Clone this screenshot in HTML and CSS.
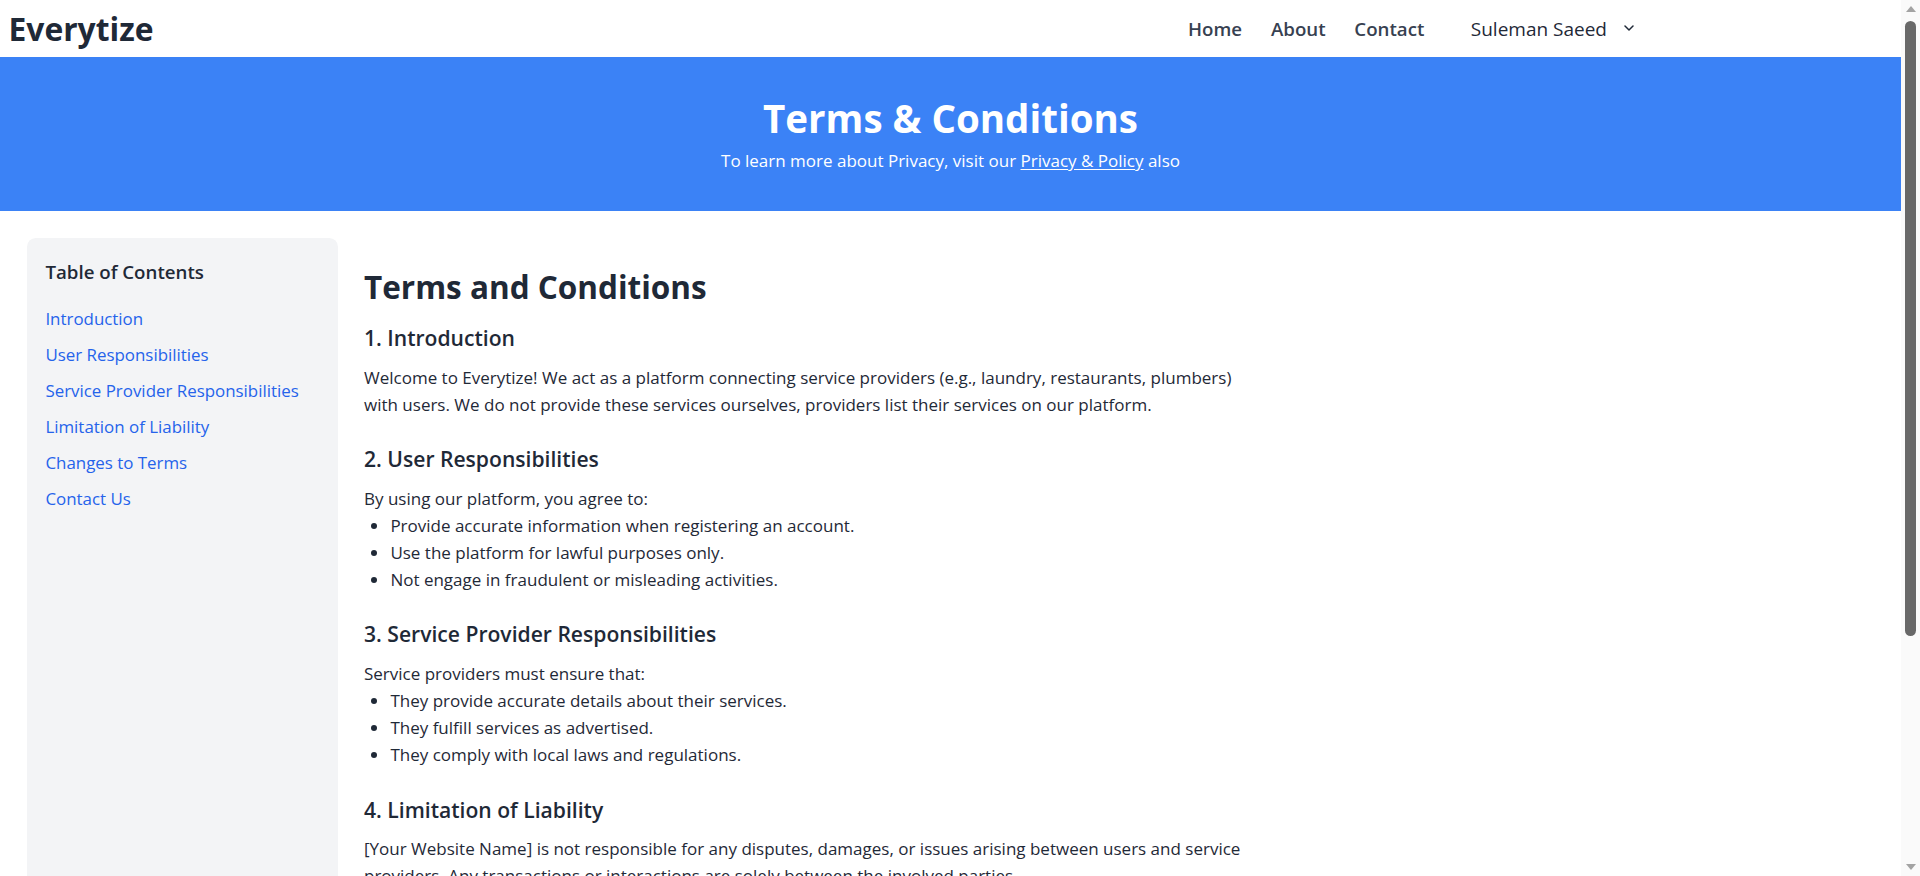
FILE: index.html
```html
<!DOCTYPE html>
<html lang="en">
<head>
<meta charset="utf-8">
<title>Terms &amp; Conditions - Everytize</title>
<link rel="stylesheet" href="styles.css">
</head>
<body>
<header class="topbar">
  <a class="logo" href="#">Everytize</a>
  <nav class="nav">
    <a href="#">Home</a>
    <a href="#">About</a>
    <a href="#">Contact</a>
    <button class="user" type="button">Suleman Saeed
      <svg class="chev" width="10" height="6" viewBox="0 0 10 6"><polyline points="1,1 5,5 9,1" fill="none" stroke="#1f2937" stroke-width="1.5" stroke-linecap="round" stroke-linejoin="round"/></svg>
    </button>
  </nav>
</header>

<section class="hero">
  <h1>Terms &amp; Conditions</h1>
  <p>To learn more about Privacy, visit our <a href="#">Privacy &amp; Policy</a> also</p>
</section>

<div class="page">
  <aside class="toc">
    <h3>Table of Contents</h3>
    <ul>
      <li><a href="#intro">Introduction</a></li>
      <li><a href="#user">User Responsibilities</a></li>
      <li><a href="#provider">Service Provider Responsibilities</a></li>
      <li><a href="#liability">Limitation of Liability</a></li>
      <li><a href="#changes">Changes to Terms</a></li>
      <li><a href="#contact">Contact Us</a></li>
    </ul>
  </aside>

  <main class="content">
    <h1>Terms and Conditions</h1>

    <section class="section" id="intro">
      <h2>1. Introduction</h2>
      <p>Welcome to Everytize! We act as a platform connecting service providers (e.g., laundry, restaurants, plumbers) with users. We do not provide these services ourselves, providers list their services on our platform.</p>
    </section>

    <section class="section" id="user">
      <h2>2. User Responsibilities</h2>
      <p>By using our platform, you agree to:</p>
      <ul>
        <li>Provide accurate information when registering an account.</li>
        <li>Use the platform for lawful purposes only.</li>
        <li>Not engage in fraudulent or misleading activities.</li>
      </ul>
    </section>

    <section class="section" id="provider">
      <h2>3. Service Provider Responsibilities</h2>
      <p>Service providers must ensure that:</p>
      <ul>
        <li>They provide accurate details about their services.</li>
        <li>They fulfill services as advertised.</li>
        <li>They comply with local laws and regulations.</li>
      </ul>
    </section>

    <section class="section" id="liability">
      <h2>4. Limitation of Liability</h2>
      <p>[Your Website Name] is not responsible for any disputes, damages, or issues arising between users and service providers. Any transactions or interactions are solely between the involved parties.</p>
    </section>

    <section class="section" id="changes">
      <h2>5. Changes to Terms</h2>
      <p>We may update these Terms and Conditions from time to time. Continued use of the platform after changes are posted means you accept the updated terms.</p>
    </section>

    <section class="section" id="contact">
      <h2>6. Contact Us</h2>
      <p>If you have any questions about these Terms and Conditions, please contact us through the Contact page.</p>
    </section>
  </main>
</div>

<div class="scrollbar" aria-hidden="true">
  <svg class="sb-arrow sb-up" width="10" height="6" viewBox="0 0 10 6"><polygon points="0,6 5,0 10,6" fill="#a3a3a3"/></svg>
  <div class="sb-thumb"></div>
  <svg class="sb-arrow sb-down" width="10" height="6" viewBox="0 0 10 6"><polygon points="0,0 10,0 5,6" fill="#a3a3a3"/></svg>
</div>
</body>
</html>
```
FILE: styles.css
```css
html, body {
  margin: 0;
  padding: 0;
}

body {
  font-family: "Open Sans", "Noto Sans", sans-serif;
  color: #1f2937;
  background: #ffffff;
  padding-right: 19px;
}

/* header */
.topbar {
  display: flex;
  align-items: center;
  height: 57px;
  padding: 0 267px 0 8.5px;
  background: #ffffff;
}

.logo {
  font-size: 31.8px;
  font-weight: 700;
  line-height: 1;
  color: #1f2937;
  text-decoration: none;
}

.nav {
  margin-left: auto;
  display: flex;
  align-items: center;
  gap: 28.8px;
}

.nav a {
  font-size: 18.7px;
  font-weight: 600;
  color: #374151;
  text-decoration: none;
}

.user {
  margin-left: 17.6px;
  display: flex;
  align-items: center;
  padding: 0;
  border: 0;
  background: none;
  font-family: inherit;
  font-size: 19px;
  font-weight: 400;
  color: #1f2937;
  cursor: pointer;
}

.chev {
  margin-left: 17px;
  margin-top: -1px;
}

/* hero */
.hero {
  background: #3b82f6;
  color: #ffffff;
  text-align: center;
  padding: 38.5px 16px 37px;
}

.hero h1 {
  margin: 0;
  font-size: 38.5px;
  line-height: 44px;
  font-weight: 700;
}

.hero p {
  margin: 8px 0 0;
  font-size: 17px;
  line-height: 26.4px;
}

.hero a {
  color: #ffffff;
  text-decoration: underline;
  text-underline-offset: 2px;
}

/* page layout */
.page {
  display: flex;
  align-items: stretch;
  gap: 26.4px;
  padding: 26.6px 26.4px 60px 27px;
}

.toc {
  flex: 0 0 310.6px;
  box-sizing: border-box;
  background: #f3f4f6;
  border-radius: 8.8px;
  padding: 19.5px 17.6px 19.5px 18.4px;
}

.toc h3 {
  margin: 0 0 18.2px;
  font-size: 18.7px;
  line-height: 30.8px;
  font-weight: 600;
  color: #1f2937;
}

.toc ul {
  list-style: none;
  margin: 0;
  padding: 0;
  display: flex;
  flex-direction: column;
  gap: 9.6px;
}

.toc a {
  display: block;
  font-size: 16.9px;
  line-height: 26.4px;
  color: #2563eb;
  text-decoration: none;
}

.content {
  flex: 0 1 890px;
  padding-top: 29.4px;
}

.content h1 {
  margin: 0 0 16.8px;
  font-size: 31.5px;
  line-height: 39.6px;
  font-weight: 700;
  color: #1f2937;
}

.section {
  margin-bottom: 26.7px;
}

.section h2 {
  margin: 0 0 9.6px;
  font-size: 21.1px;
  line-height: 30.8px;
  font-weight: 600;
  color: #1f2937;
}

.section p {
  margin: 0;
  font-size: 17px;
  line-height: 27px;
  color: #1f2937;
}

.section ul {
  margin: 0;
  padding-left: 26.4px;
  list-style: disc;
  font-size: 17px;
  line-height: 27px;
  color: #1f2937;
}

/* window scrollbar as drawn in the reference */
.scrollbar {
  position: fixed;
  top: 0;
  right: 0;
  width: 19px;
  height: 100vh;
  background: #fafafa;
}

.sb-arrow {
  position: absolute;
  left: 5px;
}

.sb-up {
  top: 6px;
}

.sb-down {
  bottom: 6px;
}

.sb-thumb {
  position: absolute;
  top: 21px;
  left: 4px;
  width: 11px;
  height: 615px;
  border-radius: 6px;
  background: #686868;
}
```
